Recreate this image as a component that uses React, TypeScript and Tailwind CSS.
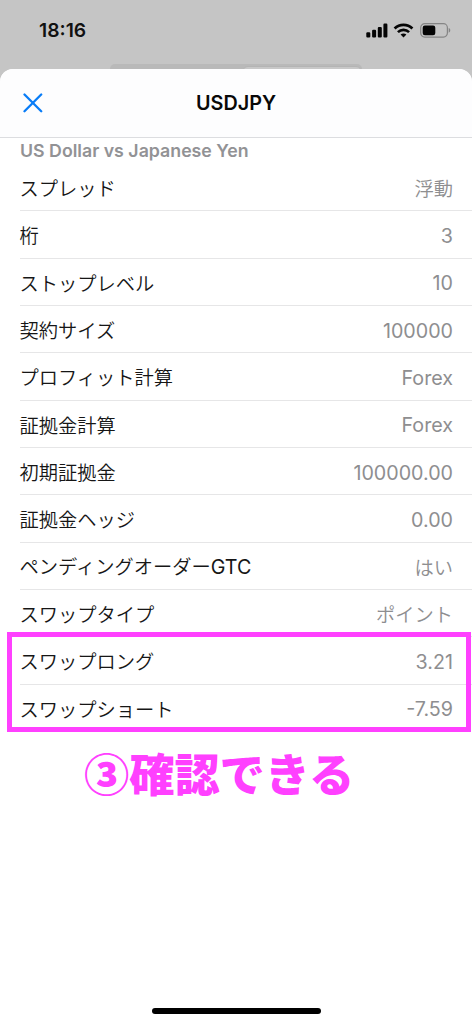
import React from 'react';

type Spec = { label: string; value: string };

const specs: Spec[] = [
  { label: 'スプレッド', value: '浮動' },
  { label: '桁', value: '3' },
  { label: 'ストップレベル', value: '10' },
  { label: '契約サイズ', value: '100000' },
  { label: 'プロフィット計算', value: 'Forex' },
  { label: '証拠金計算', value: 'Forex' },
  { label: '初期証拠金', value: '100000.00' },
  { label: '証拠金ヘッジ', value: '0.00' },
  { label: 'ペンディングオーダーGTC', value: 'はい' },
  { label: 'スワップタイプ', value: 'ポイント' },
];

const swaps: Spec[] = [
  { label: 'スワップロング', value: '3.21' },
  { label: 'スワップショート', value: '-7.59' },
];

// Latin runs are set a touch larger than the Japanese around them
const MixedText: React.FC<{ text: string }> = ({ text }) => (
  <>
    {text
      .split(/([\x20-\x7e]+)/)
      .filter(Boolean)
      .map((part, i) => (
        <span key={i} className={/^[\x20-\x7e]/.test(part) ? 'text-[19.7px] font-normal' : 'font-[350]'}>
          {part}
        </span>
      ))}
  </>
);

const SpecRow: React.FC<Spec & { last?: boolean }> = ({ label, value, last }) => (
  <div
    className={`ml-[19.5px] flex h-[47.33px] items-center justify-between border-b pt-[5px] pr-[19px] text-[19.25px] leading-none ${
      last ? 'border-transparent' : 'border-[#e6e6e7]'
    }`}
  >
    <span className="text-[#161616]">
      <MixedText text={label} />
    </span>
    <span className="text-[#8e8e90]">
      <MixedText text={value} />
    </span>
  </div>
);

const StatusBar = () => (
  <div className="flex h-[60px] items-center justify-between pr-[21px] pl-[39px]">
    <span className="pt-[2px] text-[19.3px] leading-none font-semibold text-[#111]">18:16</span>
    <div className="flex items-center">
      {/* Signal */}
      <svg className="h-[15px] w-[22px]" viewBox="0 0 22 15" fill="#050505">
        <rect x="0.3" y="9.3" width="4" height="5.2" rx="1.1" />
        <rect x="6.1" y="6.8" width="4" height="7.7" rx="1.1" />
        <rect x="11.8" y="3.9" width="4" height="10.6" rx="1.1" />
        <rect x="17.4" y="0.6" width="4" height="13.9" rx="1.1" />
      </svg>
      {/* Wi-Fi */}
      <svg className="ml-[5px] h-[15px] w-[21px]" viewBox="0 0 21 15" fill="none" stroke="#050505">
        <path d="M1.6 5.5C6.6 0.7 14.4 0.7 19.4 5.5" strokeWidth="2.8" />
        <path d="M4.9 9.1C8.1 6.1 12.9 6.1 16.1 9.1" strokeWidth="2.6" />
        <path d="M10.5 14.4L7.6 11.6C9.3 10.2 11.7 10.2 13.4 11.6Z" fill="#050505" stroke="none" />
      </svg>
      {/* Battery */}
      <svg className="ml-[6px] h-[15px] w-[31px]" viewBox="0 0 31 15" fill="none">
        <rect x="0.7" y="0.7" width="26.7" height="13.4" rx="4" stroke="#858585" strokeWidth="1.2" />
        <rect x="2.7" y="2.5" width="12.6" height="9.8" rx="2.2" fill="#050505" />
        <path d="M28.7 5.1C30.8 5.7 30.8 9.1 28.7 9.7Z" fill="#858585" />
      </svg>
    </div>
  </div>
);

export default function App() {
  return (
    <div className="h-[1024px] w-[473px] overflow-hidden bg-white pr-px font-['Inter','Noto_Sans_CJK_JP',sans-serif]">
      <div className="flex h-full flex-col bg-[#c5c5c5]">
        <StatusBar />

        {/* Top edge of the segmented control behind the sheet */}
        <div className="mt-[4px] ml-[110px] flex h-[5px] w-[252px] justify-end overflow-hidden rounded-t-[5px] bg-[#b9b9b9]">
          <div className="mt-[2px] h-[10px] w-[120px] rounded-t-[6px] border border-[#b4b4b4] bg-[#c8c8c8]" />
        </div>

        <div className="flex flex-1 flex-col rounded-t-[13px] bg-white">
          {/* Header */}
          <div className="grid h-[69px] grid-cols-[1fr_auto_1fr] items-center rounded-t-[13px] border-b border-[#dcdde0] bg-[#fdfdfe] px-[23px]">
            <svg className="h-[20px] w-[20px]" viewBox="0 0 20 20" stroke="#087cf7" strokeWidth="2.3" strokeLinecap="round">
              <path d="M1.5 1.5L18.2 18.2M18.2 1.5L1.5 18.2" />
            </svg>
            <h1 className="pt-[2px] text-[19.8px] leading-none font-semibold text-[#080808]">USDJPY</h1>
          </div>

          <h2 className="flex h-[26px] items-center pl-[20px] text-[17.75px] leading-none font-semibold text-[#929295]">
            US Dollar vs Japanese Yen
          </h2>

          {specs.map((spec) => (
            <SpecRow key={spec.label} {...spec} />
          ))}

          <div className="relative">
            {swaps.map((spec, i) => (
              <SpecRow key={spec.label} {...spec} last={i === swaps.length - 1} />
            ))}
            <div className="absolute -top-[5.4px] left-[7px] h-[100px] w-[464px] border-[5.5px] border-[#ff40ff]" />
          </div>

          <p className="mt-[18px] ml-[84px] text-[45.3px] leading-none font-black tracking-[-0.1px] whitespace-nowrap text-[#ff40ff]">
            <span className="font-['Noto_Sans_CJK_JP',sans-serif]">③確認できる</span>
          </p>

          {/* Home indicator */}
          <div className="mt-auto mb-[10px] ml-[152px] h-[6px] w-[169px] rounded-full bg-black" />
        </div>
      </div>
    </div>
  );
}
